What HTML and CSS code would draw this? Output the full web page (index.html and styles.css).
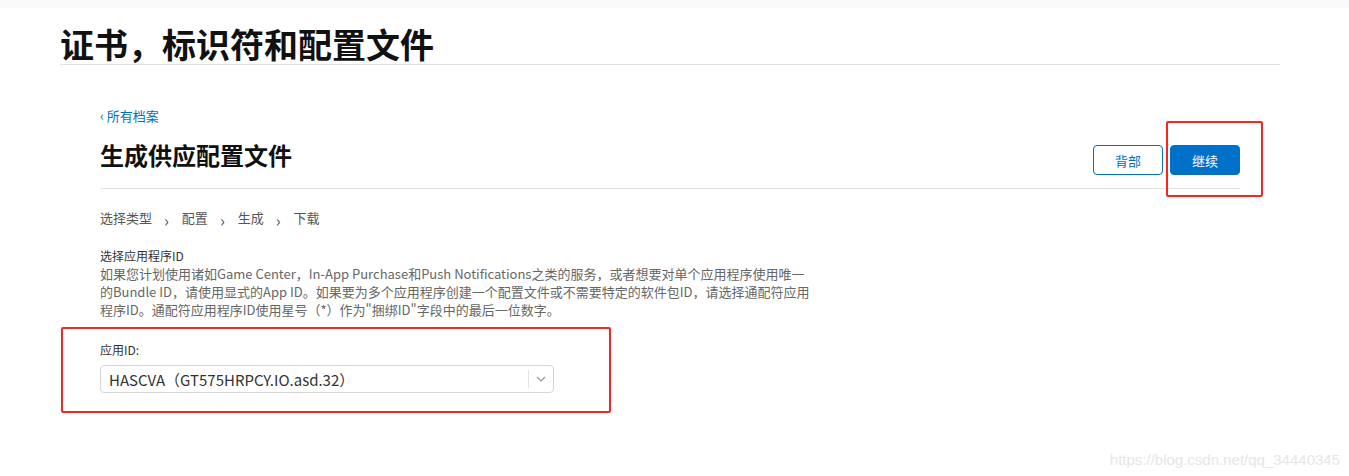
FILE: index.html
```html
<!DOCTYPE html>
<html lang="zh-CN">
<head>
    <meta charset="UTF-8">
    <meta name="viewport" content="width=device-width, initial-scale=1.0">
    <title>证书，标识符和配置文件</title>
    <link rel="stylesheet" href="styles.css">
</head>
<body>
    <div class="top-bar"></div>
    <div class="page">
        <h1 class="page-title">证书，标识符和配置文件</h1>

        <div class="content">
            <a class="back-link" href="#"><span class="chev">‹</span> 所有档案</a>

            <div class="head-row">
                <h2>生成供应配置文件</h2>
                <div class="actions">
                    <button class="btn btn-outline">背部</button>
                    <button class="btn btn-primary">继续</button>
                    <div class="mark mark-btn"></div>
                </div>
            </div>

            <div class="steps">
                <span>选择类型</span><span class="sep">›</span>
                <span>配置</span><span class="sep">›</span>
                <span>生成</span><span class="sep">›</span>
                <span>下载</span>
            </div>

            <div class="section">
                <div class="section-title">选择应用程序ID</div>
                <p class="desc">如果您计划使用诸如Game Center，In-App Purchase和Push Notifications之类的服务，或者想要对单个应用程序使用唯一的Bundle ID，请使用显式的App ID。如果要为多个应用程序创建一个配置文件或不需要特定的软件包ID，请选择通配符应用程序ID。通配符应用程序ID使用星号（*）作为"捆绑ID"字段中的最后一位数字。</p>
            </div>

            <div class="field">
                <div class="mark mark-field"></div>
                <label>应用ID:</label>
                <div class="select">
                    <span class="select-value">HASCVA（GT575HRPCY.IO.asd.32）</span>
                    <span class="select-arrow">
                        <svg width="10" height="6" viewBox="0 0 10 6"><path d="M1 1l4 4 4-4" fill="none" stroke="#999" stroke-width="1.2"/></svg>
                    </span>
                </div>
            </div>
        </div>
    </div>
    <div class="watermark">https://blog.csdn.net/qq_34440345</div>
</body>
</html>
```

FILE: styles.css
```css
body {
    margin: 0;
    font-family: "Noto Sans CJK SC", "Liberation Sans", sans-serif;
    background-color: #fff;
    color: #333;
    position: relative;
    height: 476px;
    overflow: hidden;
}

.top-bar {
    height: 8px;
    background-color: #f9f9f9;
}

.page {
    margin: 0 69px 0 60px;
}

.page-title {
    margin: 0;
    padding-top: 16px;
    font-size: 34px;
    line-height: 40px;
    font-weight: 700;
    color: #111;
    border-bottom: 1px solid #e3e3e3;
}

.content {
    margin: 0 40px;
    padding-top: 43px;
}

.back-link {
    display: block;
    font-size: 13px;
    line-height: 16px;
    color: #0070c9;
    text-decoration: none;
}

.back-link .chev {
    font-size: 13px;
}

.head-row {
    display: flex;
    justify-content: space-between;
    align-items: flex-start;
    padding: 14px 0 13px;
    border-bottom: 1px solid #e3e3e3;
}

.head-row h2 {
    margin: 0;
    font-size: 24px;
    line-height: 34px;
    font-weight: 700;
    color: #111;
}

.actions {
    display: flex;
    gap: 7px;
    position: relative;
    margin-top: 7px;
}

.btn {
    width: 70px;
    height: 30px;
    font-family: inherit;
    font-size: 13px;
    border-radius: 4px;
    border: 1px solid #0070c9;
    cursor: pointer;
    padding: 0;
}

.btn-outline {
    background-color: #fff;
    color: #0070c9;
}

.btn-primary {
    background-color: #0070c9;
    color: #fff;
}

.mark {
    position: absolute;
    border: 2px solid #f22;
    border-radius: 2px;
}

.mark-btn {
    left: 73px;
    top: -24px;
    width: 93px;
    height: 72px;
}

.steps {
    display: flex;
    align-items: center;
    margin-top: 19px;
    height: 20px;
    font-size: 13px;
    line-height: 20px;
    color: #555;
}

.steps .sep {
    margin: 0 13px 0 12px;
    font-size: 16px;
    position: relative;
    top: 2px;
}

.section {
    margin-top: 19px;
}

.section-title {
    font-size: 12px;
    line-height: 18px;
    color: #333;
}

.desc {
    margin: 0;
    width: 712px;
    font-size: 13px;
    line-height: 18px;
    color: #666;
}

.field {
    position: relative;
    margin-top: 22px;
}

.mark-field {
    left: -39px;
    top: -14px;
    width: 546px;
    height: 82px;
}

.field label {
    display: block;
    font-size: 12px;
    line-height: 18px;
    color: #333;
}

.select {
    margin-top: 6px;
    width: 452px;
    height: 26px;
    border: 1px solid #d6d6d6;
    border-radius: 4px;
    display: flex;
    align-items: center;
    justify-content: space-between;
}

.select-value {
    padding-left: 8px;
    font-size: 15px;
    color: #333;
}

.select-arrow {
    width: 24px;
    height: 18px;
    border-left: 1px solid #e3e3e3;
    display: flex;
    align-items: center;
    justify-content: center;
}

.watermark {
    position: absolute;
    right: 9px;
    bottom: 8px;
    font-family: "Liberation Sans", sans-serif;
    font-size: 15px;
    color: #e6e6e6;
}
```
